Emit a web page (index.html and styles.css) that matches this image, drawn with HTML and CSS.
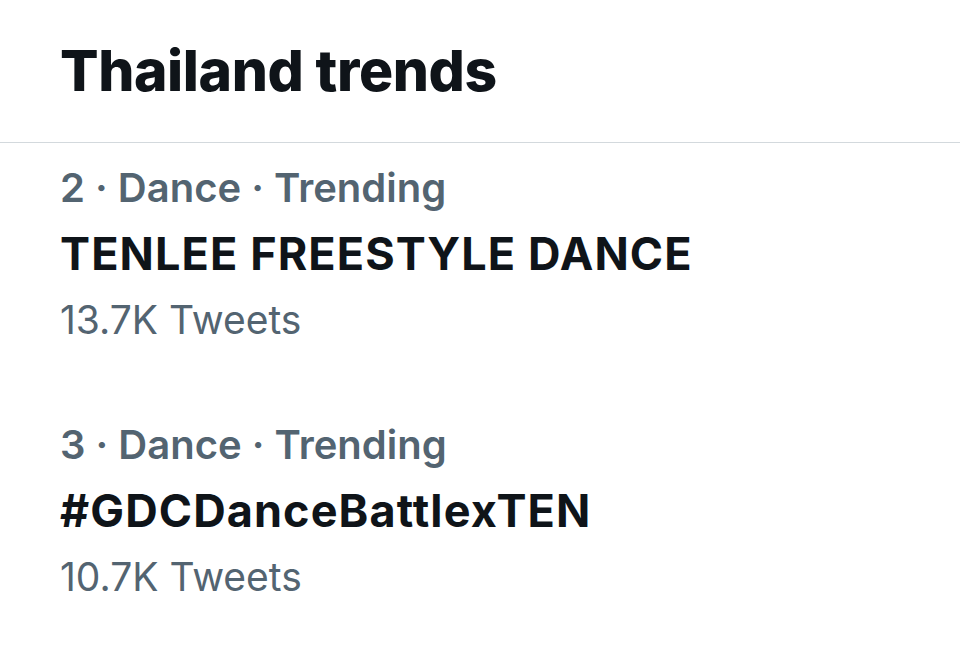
FILE: index.html
```html
<!DOCTYPE html>
<html>
<head>
<meta charset="utf-8">
<link rel="stylesheet" href="styles.css">
</head>
<body>
<div class="panel">
  <h1 class="heading">Thailand trends</h1>
  <div class="list">
    <div class="trend">
      <div class="meta">2 · Dance · Trending</div>
      <div class="title">TENLEE FREESTYLE DANCE</div>
      <div class="count">13.7K Tweets</div>
    </div>
    <div class="trend">
      <div class="meta">3 · Dance · Trending</div>
      <div class="title">#GDCDanceBattlexTEN</div>
      <div class="count">10.7K Tweets</div>
    </div>
  </div>
</div>
</body>
</html>
```

FILE: styles.css
```css
html, body {
  margin: 0;
  padding: 0;
  background: #ffffff;
}
body {
  font-family: Inter, "Noto Sans", "Liberation Sans", sans-serif;
  width: 960px;
  height: 647px;
  overflow: hidden;
}
.heading {
  margin: 0;
  padding: 37px 60px 0;
  height: 143px;
  box-sizing: border-box;
  font-size: 57px;
  font-weight: 800;
  line-height: 68px;
  color: #0f1419;
  letter-spacing: -0.4px;
  border-bottom: 1px solid #d3d9dd;
}
.list {
  padding: 12px 60px 0;
}
.trend {
  display: flex;
  flex-direction: column;
  margin-bottom: 59px;
}
.meta {
  font-size: 40px;
  font-weight: 600;
  color: #536471;
  line-height: 66px;
}
.title {
  font-size: 45px;
  font-weight: 700;
  color: #0f1419;
  line-height: 66px;
  letter-spacing: 1.1px;
}
.count {
  font-size: 39px;
  font-weight: 400;
  color: #536471;
  line-height: 66px;
}
```
